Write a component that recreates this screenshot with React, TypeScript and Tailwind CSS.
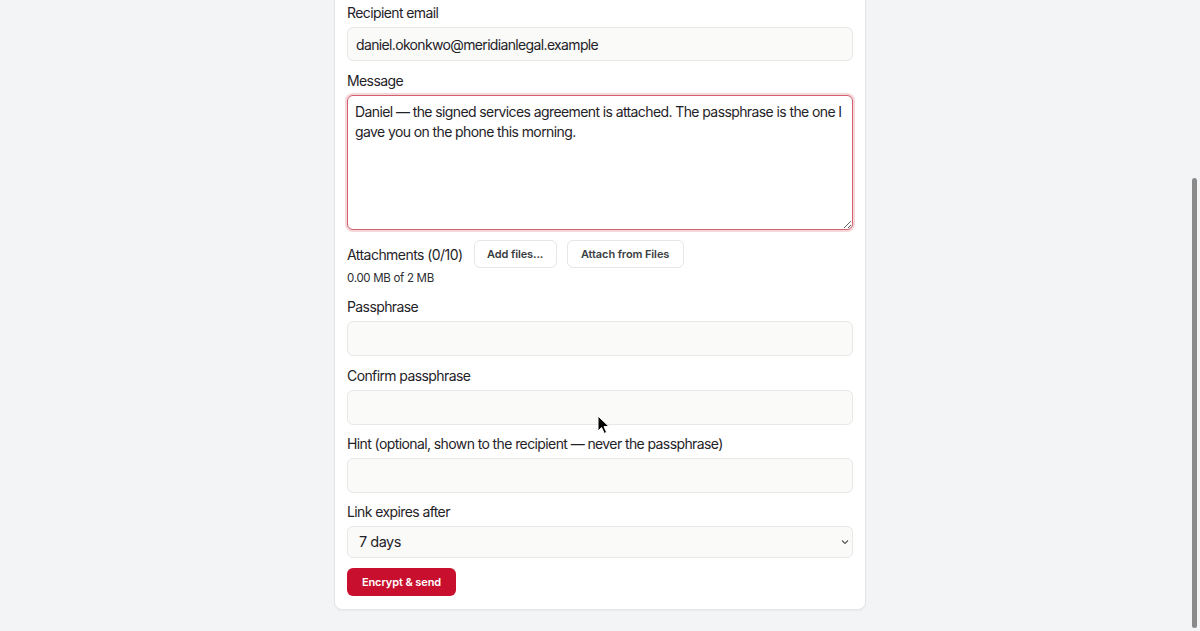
import React from "react";

const font = { fontFamily: "Inter, 'Noto Sans', 'Liberation Sans', sans-serif" };

function Label({ children }: { children: React.ReactNode }) {
  return <div className="text-[14px] leading-[20px] tracking-[-0.6px] text-[#1f2328] mb-1">{children}</div>;
}

function Input({ value = "", h = "h-[35px]" }: { value?: string; h?: string }) {
  return (
    <input
      readOnly
      value={value}
      className={`block w-full ${h} rounded-md border border-[#e8e8e6] bg-[#fafaf8] px-[8px] text-[14px] tracking-[-0.65px] text-[#1f2328] outline-none`}
    />
  );
}

export default function App() {
  return (
    <div className="relative min-h-[631px] h-[631px] overflow-hidden bg-[#f3f4f6]" style={font}>
      <div className="mx-auto w-[532px] bg-white border border-t-0 border-[#e4e5e7] rounded-b-lg shadow-[0_1px_2px_rgba(0,0,0,0.04)] px-3 pb-[13px] pt-[3px]">
        <Label>Recipient email</Label>
        <Input value="daniel.okonkwo@meridianlegal.example" h="h-[34px]" />

        <div className="mt-[10px]">
          <Label>Message</Label>
          <textarea
            readOnly
            value="Daniel — the signed services agreement is attached. The passphrase is the one I gave you on the phone this morning."
            className="block w-full h-[135px] rounded-md border border-[#d2606e] bg-white px-[7px] pt-[6px] pb-[7px] text-[14px] leading-[20px] tracking-[-0.6px] text-[#1f2328] outline-none shadow-[0_0_0_2px_rgba(214,90,108,0.25)]"
          />
        </div>

        <div className="mt-[10px] flex items-center gap-[10px] h-[28px]">
          <span className="text-[14px] tracking-[-0.55px] text-[#1f2328] mr-[1px]">Attachments (0/10)</span>
          <button className="h-[28px] w-[83px] rounded-md border border-[#e6e6e6] bg-white text-[11px] font-semibold tracking-[-0.1px] text-[#3a3d42]">
            Add files...
          </button>
          <button className="h-[28px] w-[117px] rounded-md border border-[#e6e6e6] bg-white text-[11px] font-semibold tracking-[-0.1px] text-[#3a3d42]">
            Attach from Files
          </button>
        </div>
        <div className="mt-[2px] text-[11.5px] leading-[16px] tracking-[-0.3px] text-[#2a2d31]">0.00 MB of 2 MB</div>

        <div className="mt-[11px]">
          <Label>Passphrase</Label>
          <Input />
        </div>
        <div className="mt-[10px]">
          <Label>Confirm passphrase</Label>
          <Input />
        </div>
        <div className="mt-[9px]">
          <Label>Hint (optional, shown to the recipient — never the passphrase)</Label>
          <Input />
        </div>
        <div className="mt-[9px]">
          <Label>Link expires after</Label>
          <div className="relative">
            <select
              defaultValue="7"
              className="block w-full h-[32px] appearance-none rounded-md border border-[#e8e8e6] bg-[#fafaf8] pl-[11px] text-[14.5px] tracking-[-0.5px] text-[#1f2328] outline-none"
            >
              <option value="1">1 day</option>
              <option value="7">7 days</option>
              <option value="30">30 days</option>
            </select>
            <svg className="pointer-events-none absolute right-[4px] top-[13px]" width="8" height="6" viewBox="0 0 8 6">
              <path d="M1 1.5 L4 4.5 L7 1.5" fill="none" stroke="#555" strokeWidth="1.1" />
            </svg>
          </div>
        </div>

        <button className="mt-[10px] h-[28px] w-[109px] rounded-md bg-[#c8102e] text-[11px] font-semibold tracking-[-0.1px] text-white">
          Encrypt &amp; send
        </button>
      </div>

      {/* overlay scrollbar */}
      <div className="absolute right-[3px] top-[178px] h-[450px] w-[5px] rounded-full bg-[#8a8a8a]" />

      {/* mouse cursor */}
      <svg className="absolute left-[597px] top-[415px]" width="14" height="20" viewBox="0 0 14 20">
        <path d="M1 1 L1 16 L4.6 12.6 L7.2 18.4 L9.6 17.3 L7 11.6 L12 11.6 Z" fill="#000" stroke="#fff" strokeWidth="1" strokeLinejoin="round" />
      </svg>
    </div>
  );
}
